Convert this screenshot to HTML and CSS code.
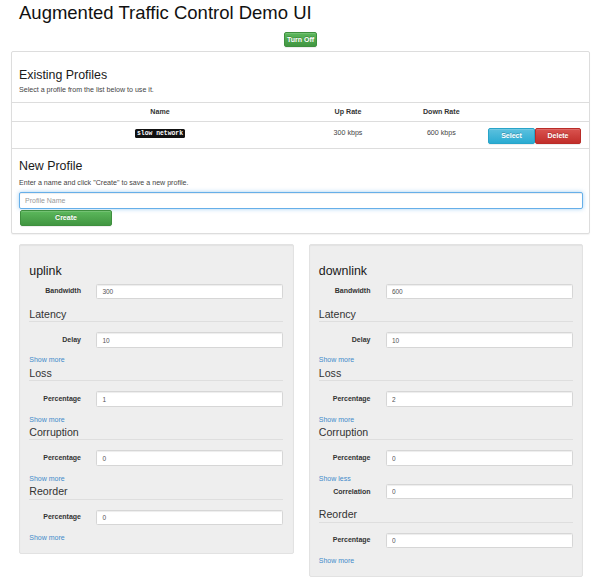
FILE: index.html
```html
<!DOCTYPE html>
<html lang="en">
<head>
<meta charset="utf-8">
<title>Augmented Traffic Control Demo UI</title>
<link rel="stylesheet" href="styles.css">
</head>
<body>
<div class="container">
  <h1 class="title">Augmented Traffic Control Demo UI</h1>
  <div class="toggle-row">
    <button class="btn btn-success btn-toggle">Turn Off</button>
  </div>

  <div class="panel">
    <div class="panel-section existing">
      <h3 class="section-title">Existing Profiles</h3>
      <p class="hint hint-existing">Select a profile from the list below to use it.</p>
    </div>
    <table class="profiles">
      <colgroup>
        <col class="c-name"><col class="c-up"><col class="c-down"><col class="c-act">
      </colgroup>
      <thead>
        <tr><th>Name</th><th>Up Rate</th><th class="down">Down Rate</th><th class="act"></th></tr>
      </thead>
      <tbody>
        <tr>
          <td><kbd>slow network</kbd></td>
          <td>300 kbps</td>
          <td class="down">600 kbps</td>
          <td class="act"><div class="act-btns"><button class="btn btn-info btn-select">Select</button><button class="btn btn-danger btn-delete">Delete</button></div></td>
        </tr>
      </tbody>
    </table>
    <div class="panel-section new">
      <h3 class="section-title">New Profile</h3>
      <p class="hint hint-new">Enter a name and click "Create" to save a new profile.</p>
      <input class="name-input" type="text" placeholder="Profile Name">
      <button class="btn btn-success btn-create">Create</button>
    </div>
  </div>

  <div class="links">
    <div class="well">
      <h3 class="section-title well-title">uplink</h3>
      <div class="field"><label>Bandwidth</label><input type="text" value="300"></div>
      <div class="legend">Latency</div>
      <div class="field"><label>Delay</label><input type="text" value="10"></div>
      <a class="toggle-link" href="#">Show more</a>
      <div class="legend">Loss</div>
      <div class="field"><label>Percentage</label><input type="text" value="1"></div>
      <a class="toggle-link" href="#">Show more</a>
      <div class="legend">Corruption</div>
      <div class="field"><label>Percentage</label><input type="text" value="0"></div>
      <a class="toggle-link" href="#">Show more</a>
      <div class="legend">Reorder</div>
      <div class="field"><label>Percentage</label><input type="text" value="0"></div>
      <a class="toggle-link" href="#">Show more</a>
    </div>
    <div class="well">
      <h3 class="section-title well-title">downlink</h3>
      <div class="field"><label>Bandwidth</label><input type="text" value="600"></div>
      <div class="legend">Latency</div>
      <div class="field"><label>Delay</label><input type="text" value="10"></div>
      <a class="toggle-link" href="#">Show more</a>
      <div class="legend">Loss</div>
      <div class="field"><label>Percentage</label><input type="text" value="2"></div>
      <a class="toggle-link" href="#">Show more</a>
      <div class="legend">Corruption</div>
      <div class="field"><label>Percentage</label><input type="text" value="0"></div>
      <a class="toggle-link" href="#">Show less</a>
      <div class="field"><label>Correlation</label><input type="text" value="0"></div>
      <div class="legend">Reorder</div>
      <div class="field"><label>Percentage</label><input type="text" value="0"></div>
      <a class="toggle-link" href="#">Show more</a>
    </div>
  </div>
</div>
</body>
</html>
```

FILE: styles.css
```css
* { box-sizing: border-box; }
html, body { margin: 0; padding: 0; background: #ffffff; }
body {
  font-family: "Liberation Sans", Arial, Helvetica, sans-serif;
  font-size: 7.1px;
  line-height: 10.3px;
  color: #333333;
}
.container { padding: 0 10px 0 11px; }

.title {
  font-size: 18.5px;
  line-height: 20px;
  font-weight: normal;
  margin: 3px 0 0;
  padding-left: 8px;
  color: #111111;
}
.toggle-row { display: flex; justify-content: center; margin-top: 9px; }

.btn {
  display: inline-flex;
  align-items: center;
  justify-content: center;
  font-family: inherit;
  font-weight: bold;
  font-size: 7px;
  line-height: 1;
  color: #ffffff;
  border: 1px solid;
  border-radius: 2px;
  padding: 0;
  height: 16px;
  text-shadow: 0 -1px 0 rgba(0,0,0,0.2);
  box-shadow: inset 0 1px 0 rgba(255,255,255,0.15), 0 1px 1px rgba(0,0,0,0.075);
}
.btn-success { background: linear-gradient(#5cb85c, #419641); border-color: #3e8f3e; }
.btn-info { background: linear-gradient(#5bc0de, #2aabd2); border-color: #28a4c9; }
.btn-danger { background: linear-gradient(#d9534f, #c12e2a); border-color: #b92c28; }
.btn-toggle { height: 15px; padding: 0 2px; }

.panel {
  margin-top: 4px;
  border: 1px solid #dddddd;
  border-radius: 2px;
  background: #ffffff;
  box-shadow: 0 1px 1px rgba(0,0,0,0.05);
}
.panel-section { padding: 0 6px 0 7px; }
.section-title {
  font-size: 12.4px;
  line-height: 13.6px;
  font-weight: normal;
  margin: 0;
  color: #1a1a1a;
}
.existing { padding-top: 16.8px; padding-bottom: 6.1px; }
.hint { margin: 0; color: #444444; }
.hint-existing { margin-top: 3.1px; }

.profiles {
  width: 100%;
  border-collapse: collapse;
  table-layout: fixed;
  border-top: 1px solid #dddddd;
  border-bottom: 1px solid #dddddd;
}
.c-name { width: 296px; }
.c-up { width: 80px; }
.c-down { width: 100px; }
.profiles th {
  font-weight: bold;
  text-align: center;
  padding: 4px;
  border-bottom: 1px solid #dddddd;
  color: #333333;
}
.profiles td {
  text-align: center;
  vertical-align: top;
  padding: 5.5px 4px 4px;
  color: #444444;
}
.profiles th.down, .profiles td.down { padding-left: 10.6px; }
.profiles td.act { padding: 5.7px 8px 4px 0; text-align: left; }
.act-btns { display: flex; }
.btn-select { width: 47px; }
.btn-delete { width: 46px; }

kbd {
  font-family: "Liberation Mono", "DejaVu Sans Mono", monospace;
  font-size: 6.4px;
  font-weight: bold;
  color: #ffffff;
  background: #111111;
  padding: 1px 2px;
  border-radius: 1.5px;
}

.new { padding-top: 11.3px; padding-bottom: 7px; }
.hint-new { margin-top: 4.4px; }
.name-input {
  display: block;
  width: 100%;
  height: 17px;
  margin-top: 3.7px;
  padding: 0 5px;
  font-family: inherit;
  font-size: 7px;
  color: #555555;
  background: #ffffff;
  border: 1px solid #66afe9;
  border-radius: 2px;
  outline: none;
  box-shadow: inset 0 1px 1px rgba(0,0,0,0.075), 0 0 4px rgba(102,175,233,0.6);
}
.name-input::placeholder { color: #999999; }
.btn-create { display: flex; width: 92px; margin-top: 0.7px; margin-left: 1px; }

.links {
  display: grid;
  grid-template-columns: 1fr 1fr;
  column-gap: 15px;
  align-items: start;
  padding: 0 7px 0 8px;
  margin-top: 10px;
}
.well {
  background: #eeeeee;
  border: 1px solid #e2e2e2;
  border-radius: 2px;
  padding: 9.8px 9.3px;
  box-shadow: inset 0 1px 1px rgba(0,0,0,0.05);
}
.well-title { margin: 10.3px 0 5px; }
.field {
  display: grid;
  grid-template-columns: 51.7px 1fr;
  column-gap: 15.4px;
  align-items: center;
  margin-bottom: 7.7px;
}
.field label {
  text-align: right;
  font-weight: bold;
  font-size: 7px;
  color: #333333;
}
.field input {
  display: block;
  width: 100%;
  height: 15.5px;
  padding: 0 5px;
  font-family: inherit;
  font-size: 6.5px;
  color: #555555;
  background: #ffffff;
  border: 1px solid #d6d6d6;
  border-radius: 1.5px;
  outline: none;
  box-shadow: inset 0 1px 1px rgba(0,0,0,0.075);
}
.legend {
  font-size: 10.6px;
  line-height: 14.6px;
  color: #333333;
  border-bottom: 1px solid #dedede;
  margin-bottom: 10px;
}
.toggle-link {
  display: block;
  color: #428bca;
  font-size: 7px;
  line-height: 10.3px;
  text-decoration: none;
}
```
